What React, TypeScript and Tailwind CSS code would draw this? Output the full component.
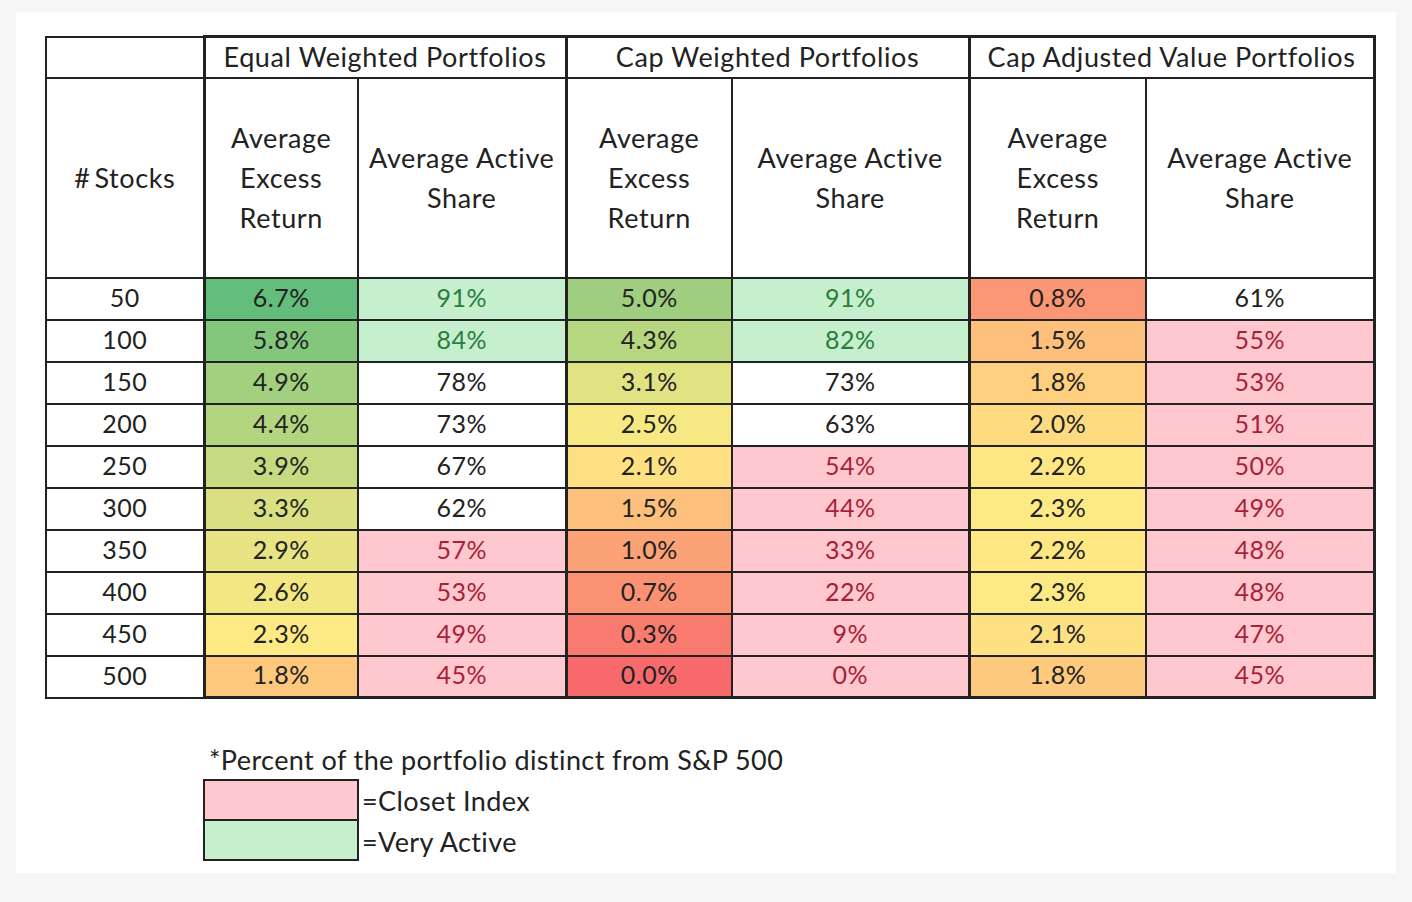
import React from "react";

type Cell = { v: string; c: string };

const G = "bg-[#C6EFCE] text-[#2a7d3c]";
const P = "bg-[#FFC7CE] text-[#a81f38]";
const W = "bg-white text-[#222]";

const rows: { n: string; cells: Cell[] }[] = [
  { n: "50", cells: [
    { v: "6.7%", c: "bg-[#63BE7B]" }, { v: "91%", c: G },
    { v: "5.0%", c: "bg-[#9FCF7E]" }, { v: "91%", c: G },
    { v: "0.8%", c: "bg-[#FB9774]" }, { v: "61%", c: W } ] },
  { n: "100", cells: [
    { v: "5.8%", c: "bg-[#83C77D]" }, { v: "84%", c: G },
    { v: "4.3%", c: "bg-[#B7D680]" }, { v: "82%", c: G },
    { v: "1.5%", c: "bg-[#FDC07C]" }, { v: "55%", c: P } ] },
  { n: "150", cells: [
    { v: "4.9%", c: "bg-[#A2D07F]" }, { v: "78%", c: W },
    { v: "3.1%", c: "bg-[#E1E282]" }, { v: "73%", c: W },
    { v: "1.8%", c: "bg-[#FECF7F]" }, { v: "53%", c: P } ] },
  { n: "200", cells: [
    { v: "4.4%", c: "bg-[#B4D580]" }, { v: "73%", c: W },
    { v: "2.5%", c: "bg-[#F6E983]" }, { v: "63%", c: W },
    { v: "2.0%", c: "bg-[#FEDB81]" }, { v: "51%", c: P } ] },
  { n: "250", cells: [
    { v: "3.9%", c: "bg-[#C5DA81]" }, { v: "67%", c: W },
    { v: "2.1%", c: "bg-[#FEE182]" }, { v: "54%", c: P },
    { v: "2.2%", c: "bg-[#FFE783]" }, { v: "50%", c: P } ] },
  { n: "300", cells: [
    { v: "3.3%", c: "bg-[#DAE082]" }, { v: "62%", c: W },
    { v: "1.5%", c: "bg-[#FDC07C]" }, { v: "44%", c: P },
    { v: "2.3%", c: "bg-[#FDEA84]" }, { v: "49%", c: P } ] },
  { n: "350", cells: [
    { v: "2.9%", c: "bg-[#E8E483]" }, { v: "57%", c: P },
    { v: "1.0%", c: "bg-[#FBA376]" }, { v: "33%", c: P },
    { v: "2.2%", c: "bg-[#FFE783]" }, { v: "48%", c: P } ] },
  { n: "400", cells: [
    { v: "2.6%", c: "bg-[#F3E783]" }, { v: "53%", c: P },
    { v: "0.7%", c: "bg-[#FA9173]" }, { v: "22%", c: P },
    { v: "2.3%", c: "bg-[#FDEA84]" }, { v: "48%", c: P } ] },
  { n: "450", cells: [
    { v: "2.3%", c: "bg-[#FDEA84]" }, { v: "49%", c: P },
    { v: "0.3%", c: "bg-[#F97A6E]" }, { v: "9%", c: P },
    { v: "2.1%", c: "bg-[#FEE182]" }, { v: "47%", c: P } ] },
  { n: "500", cells: [
    { v: "1.8%", c: "bg-[#FDC77C]" }, { v: "45%", c: P },
    { v: "0.0%", c: "bg-[#F8696B]" }, { v: "0%", c: P },
    { v: "1.8%", c: "bg-[#FDC97D]" }, { v: "45%", c: P } ] },
];

const groups = ["Equal Weighted Portfolios", "Cap Weighted Portfolios", "Cap Adjusted Value Portfolios"];

export default function App() {
  const font = { fontFamily: "Lato, 'Open Sans', sans-serif" };
  return (
    <div className="min-h-[902px] w-[1412px] bg-[#f6f6f6] pt-[12px] pl-[16px]" style={font}>
      <div className="w-[1380px] h-[861px] bg-white pt-[23px] pl-[29px] text-[#222]">
        <table className="border-collapse table-fixed w-[1330px] leading-none">
          <colgroup>
            <col className="w-[158px]" />
            <col className="w-[154px]" />
            <col className="w-[208px]" />
            <col className="w-[166px]" />
            <col className="w-[237px]" />
            <col className="w-[177px]" />
            <col className="w-[228px]" />
          </colgroup>
          <thead className="text-[27px] tracking-[0.6px]">
            <tr className="h-[41px]">
              <th className="border-2 border-[#222] font-normal"></th>
              {groups.map((g) => (
                <th key={g} colSpan={2} className="border-2 border-t-[3px] border-x-[3px] border-[#222] font-normal text-center align-middle whitespace-nowrap pb-[1px]">
                  {g}
                </th>
              ))}
            </tr>
            <tr className="h-[200px]">
              <th className="border-2 border-[#222] font-normal text-center">#&thinsp;Stocks</th>
              {[0, 1, 2].map((i) => (
                <React.Fragment key={i}>
                  <th className="border-2 border-l-[3px] border-[#222] font-normal text-center leading-[40px]">
                    Average<br />Excess<br />Return
                  </th>
                  <th className="border-2 border-r-[3px] border-[#222] font-normal text-center leading-[40px]">
                    Average Active<br />Share
                  </th>
                </React.Fragment>
              ))}
            </tr>
          </thead>
          <tbody className="text-[25px] tracking-[0.5px]">
            {rows.map((r, ri) => {
              const last = ri === rows.length - 1;
              return (
                <tr key={r.n} className="h-[42px]">
                  <td className="border-2 border-[#222] text-center pb-[3px]">{r.n}</td>
                  {r.cells.map((c, ci) => {
                    const left = ci % 2 === 0;
                    return (
                      <td
                        key={ci}
                        className={`text-center pb-[3px] border-2 border-[#222] ${left ? "border-l-[3px]" : "border-r-[3px]"} ${last ? "border-b-[3px]" : ""} ${c.c}`}
                      >
                        {c.v}
                      </td>
                    );
                  })}
                </tr>
              );
            })}
          </tbody>
        </table>

        <div className="mt-[48px] ml-[158px] text-[27px] tracking-[0.4px] leading-none">
          <div className="pl-[6px] h-[24px] flex items-center">*Percent of the portfolio distinct from S&amp;P 500</div>
          <div className="mt-[8px] flex">
            <div className="flex flex-col">
              <div className="w-[156px] h-[42px] bg-[#FFC7CE] border-2 border-[#222]"></div>
              <div className="w-[156px] h-[40px] bg-[#C6EFCE] border-2 border-t-0 border-[#222]"></div>
            </div>
            <div className="flex flex-col pl-[3px]">
              <div className="h-[42px] flex items-center">=Closet Index</div>
              <div className="h-[40px] flex items-center">=Very Active</div>
            </div>
          </div>
        </div>
      </div>
    </div>
  );
}
